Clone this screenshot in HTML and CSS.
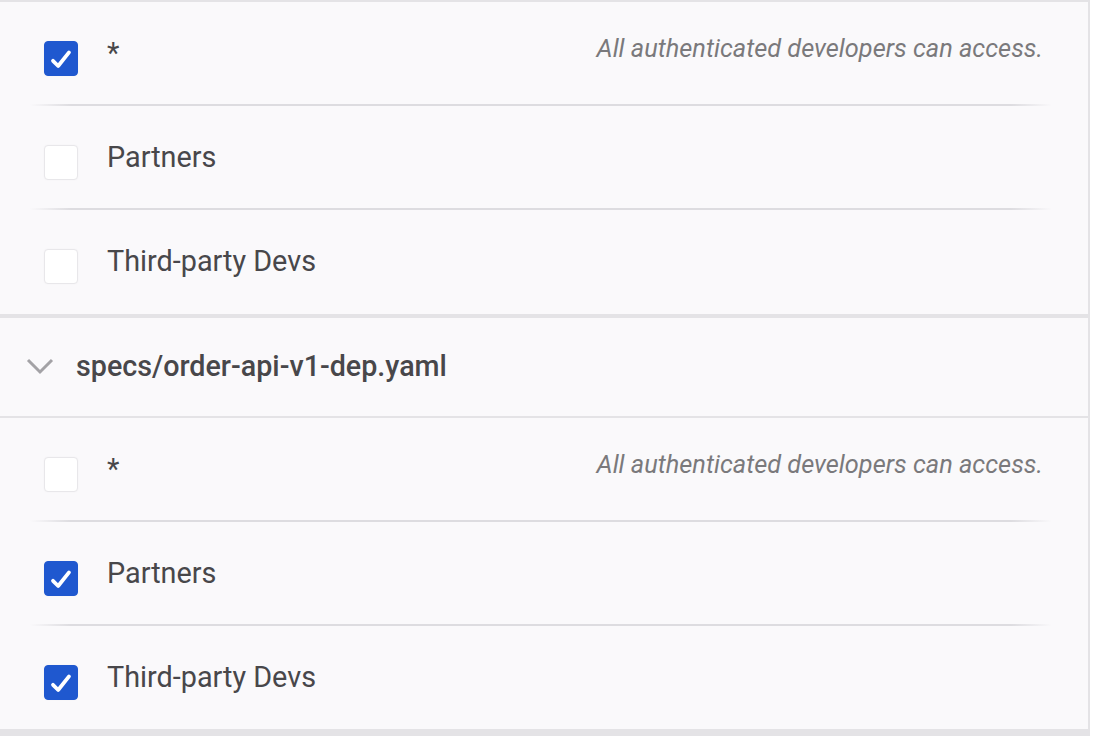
FILE: index.html
```html
<!DOCTYPE html>
<html lang="en">
<head>
<meta charset="utf-8">
<title>Spec access</title>
<link rel="stylesheet" href="styles.css">
</head>
<body>
<div class="panel">
  <section class="group group-first">
    <div class="row">
      <span class="cb cb-on"><svg viewBox="0 0 34 34"><polyline points="8.5,19.5 14,25 25.5,10.5"/></svg></span>
      <span class="label">*</span>
      <span class="hint">All authenticated developers can access.</span>
    </div>
    <div class="divider"></div>
    <div class="row">
      <span class="cb"></span>
      <span class="label">Partners</span>
    </div>
    <div class="divider"></div>
    <div class="row">
      <span class="cb"></span>
      <span class="label">Third-party Devs</span>
    </div>
  </section>
  <div class="spec-head">
    <svg class="chev" viewBox="0 0 28 20"><polyline points="2,3 14,15 26,3"/></svg>
    <span class="spec-name">specs/order-api-v1-dep.yaml</span>
  </div>
  <section class="group group-last">
    <div class="row">
      <span class="cb"></span>
      <span class="label">*</span>
      <span class="hint">All authenticated developers can access.</span>
    </div>
    <div class="divider"></div>
    <div class="row">
      <span class="cb cb-on"><svg viewBox="0 0 34 34"><polyline points="8.5,19.5 14,25 25.5,10.5"/></svg></span>
      <span class="label">Partners</span>
    </div>
    <div class="divider"></div>
    <div class="row">
      <span class="cb cb-on"><svg viewBox="0 0 34 34"><polyline points="8.5,19.5 14,25 25.5,10.5"/></svg></span>
      <span class="label">Third-party Devs</span>
    </div>
  </section>
</div>
</body>
</html>
```
FILE: styles.css
```css
html, body {
  margin: 0;
  padding: 0;
  background: #ffffff;
}
body {
  font-family: Roboto, "Liberation Sans", sans-serif;
  color: #434245;
}
.panel {
  width: 1088px;
  background: #faf9fb;
  border-top: 2px solid #e4e3e6;
  border-right: 2px solid #e4e3e6;
  border-bottom: 7px solid #e4e3e6;
}
.group-first {
  padding-bottom: 2px;
  border-bottom: 4px solid #e4e3e6;
}
.group-last {
  padding-bottom: 1px;
}
.row {
  height: 102px;
  box-sizing: border-box;
  padding: 33px 45px 0 44px;
  display: flex;
  align-items: flex-start;
  gap: 29px;
}
.label {
  font-size: 28.8px;
  line-height: 36px;
  color: #48474a;
}
.hint {
  margin-left: auto;
  margin-top: -5px;
  font-size: 25.35px;
  line-height: 36px;
  font-style: italic;
  color: #7a797c;
}
.cb {
  flex: none;
  width: 34px;
  height: 35px;
  margin-top: 6px;
  box-sizing: border-box;
  border-radius: 4px;
  background: #ffffff;
  border: 1px solid #e8e7ea;
  box-shadow: 0 0 2px rgba(0,0,0,0.04);
  display: flex;
}
.cb-on {
  background: #1f58cf;
  border-color: #1f58cf;
}
.cb svg {
  width: 100%;
  height: 100%;
}
.cb polyline {
  fill: none;
  stroke: #ffffff;
  stroke-width: 4;
  stroke-linecap: round;
  stroke-linejoin: round;
}
.divider {
  height: 2px;
  margin: 0 36px 0 30px;
  background: linear-gradient(90deg, rgba(220,219,223,0) 0%, #dddce0 4%, #dddce0 96%, rgba(220,219,223,0) 100%);
}
.spec-head {
  height: 100px;
  box-sizing: border-box;
  border-bottom: 2px solid #e4e3e6;
  display: flex;
  align-items: center;
  padding-left: 26px;
  gap: 22px;
}
.chev {
  width: 28px;
  height: 20px;
}
.chev polyline {
  fill: none;
  stroke: #a3a2a6;
  stroke-width: 3;
}
.spec-name {
  font-size: 28.7px;
  font-weight: 500;
  line-height: 36px;
  color: #48474a;
  margin-top: -3px;
}
```
